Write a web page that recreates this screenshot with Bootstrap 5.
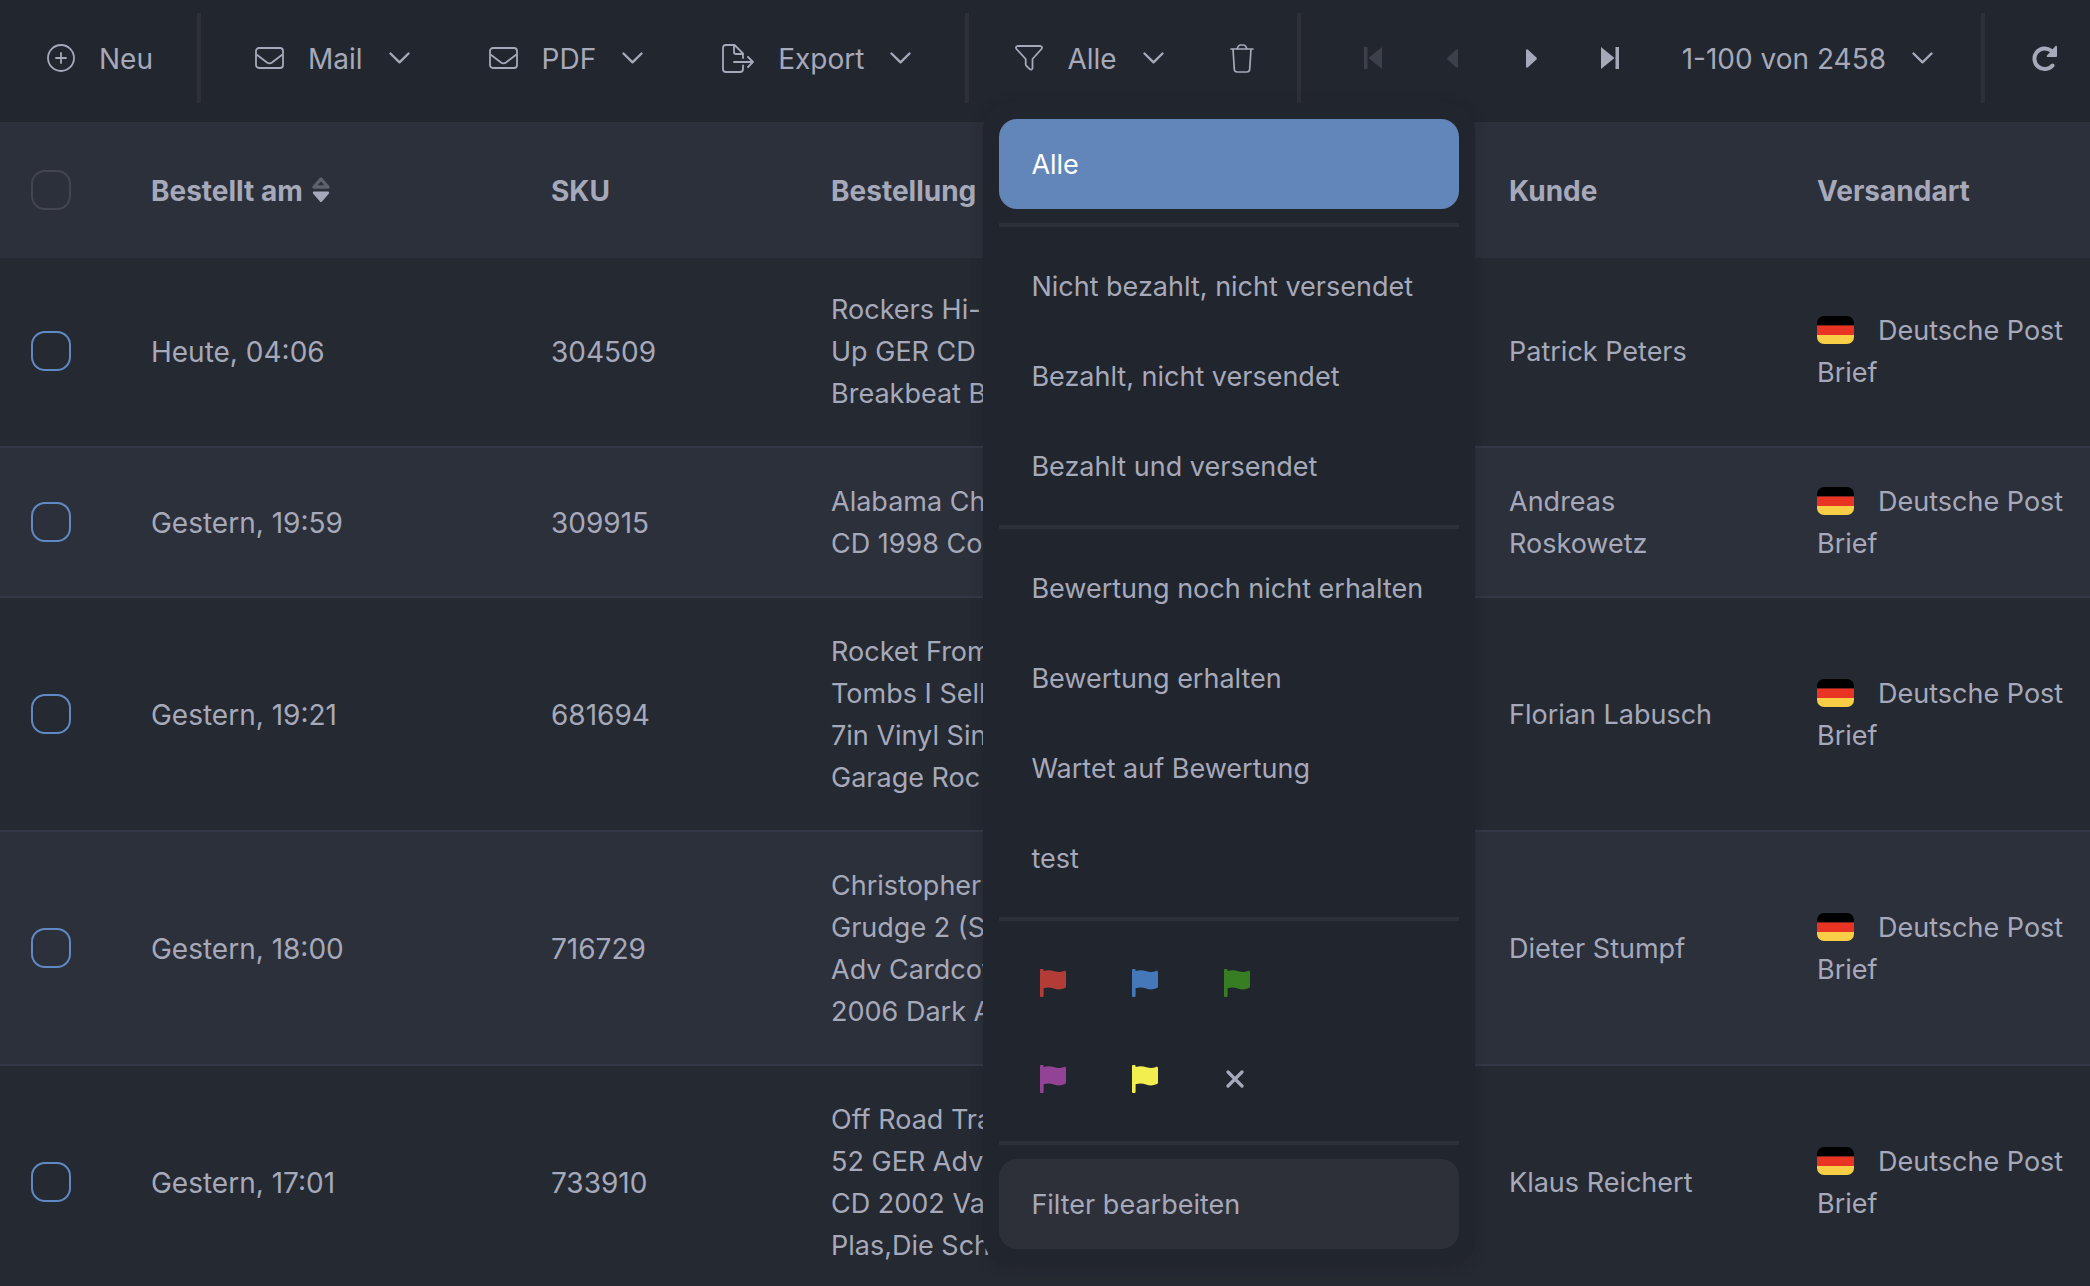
<!DOCTYPE html>
<html lang="de">
<head>
<meta charset="utf-8">
<meta name="viewport" content="width=device-width, initial-scale=1">
<title>Bestellungen</title>
<link href="https://cdn.jsdelivr.net/npm/bootstrap@5.3.0/dist/css/bootstrap.min.css" rel="stylesheet">
<style>
body { background: #252932; color: #a6a9ba; font-family: Inter, "Liberation Sans", sans-serif; font-size: 27px; line-height: 42px; }
.app { height: 100vh; overflow: hidden; }
.toolbar { background: #22262e; height: 122px; padding: 13px 0 19px 7px; position: relative; z-index: 5; font-size: 28px; }
.tool { height: 90px; padding: 0 39px 0 40px; border: 0; border-radius: 14px; background: none; color: inherit; display: flex; align-items: center; gap: 24px; white-space: nowrap; }
.tool:hover { background: #2e3039; }
.tool:disabled { color: #3d404a; background: none; }
.tool span { padding-top: 1px; }
.tool svg, .flag-btn svg { display: block; flex: none; }
.tool .chev { margin-left: 2px; }
.tool-nav { width: 79px; padding: 0; justify-content: center; }
.tool-range { padding-left: 32px; }
.tool-reload { padding-right: 32px; }
.rule-v { width: 4px; height: 90px; background: #2e3039; flex: none; margin: 0 6px 0 15px; }
.rule-first { margin: 0 14px 0 5px; }
.rule-last { margin-left: 9px; }
.filter-menu { --bs-dropdown-bg: #21252d; --bs-dropdown-color: #a6a9ba; --bs-dropdown-link-color: #a6a9ba; --bs-dropdown-link-hover-color: #a6a9ba; --bs-dropdown-link-hover-bg: #2e3039; --bs-dropdown-link-active-bg: #6386ba; --bs-dropdown-link-active-color: #fff; top: 100%; left: 8px; width: 492px; padding: 16px; border: 0; border-radius: 28px; font-size: 27px; box-shadow: 0 2px 14px rgba(20, 22, 30, .2); }
.filter-menu .dropdown-item { height: 90px; padding: 25px 32px 23px; border-radius: 18px; line-height: 42px; }
.filter-menu .dropdown-item.edit { background: #2e3039; }
.filter-menu .dropdown-divider { height: 4px; margin: 14px 0; border: 0; background: #2e3039; opacity: 1; }
.flags { display: grid; grid-template-columns: repeat(3, 92px); padding: 0 8px; }
.flag-btn { height: 96px; border: 0; background: none; color: inherit; padding: 0; display: flex; align-items: center; justify-content: center; }
.orders { width: 100%; table-layout: fixed; border-collapse: separate; border-spacing: 0; }
.orders th, .orders td { padding: 33px 0 31px 40px; vertical-align: middle; }
.orders td { border-top: 2px solid #353945; }
.orders td:nth-child(2), .orders td:nth-child(3) { font-size: 28px; }
.orders th { background: #2c303a; height: 134px; font-size: 28px; font-weight: 700; padding-top: 34px; white-space: nowrap; }
.orders tbody tr:first-child td { border-top-color: #2c303a; padding-top: 31px; }
.orders tbody tr:nth-child(even) { background: #2c303a; }
.orders th:first-child, .orders td:first-child { padding-left: 31px; padding-bottom: 33px; }
.orders td:last-child { padding-right: 20px; }
.orders .form-check-input { display: block; width: 40px; height: 40px; margin: 0; border: 2px solid #6089c4; border-radius: 14px; background-color: transparent; }
.orders th .form-check-input { border-color: #434651; }
.sort-icon { margin-left: 3px; vertical-align: -2px; }
.flag-de { width: 37px; height: 28px; margin-right: 24px; border-radius: 7px; vertical-align: -4px; }
</style>
</head>
<body>
<svg class="d-none" aria-hidden="true">
  <symbol id="mail" viewBox="0 0 29 22"><g fill="none" stroke="currentColor" stroke-width="1.8" stroke-linejoin="round"><rect x="1" y="1" width="27" height="20" rx="3"/><path d="M1.500 7.500 12 15.500q2.500 1.800 5 0L27.500 7.500"/></g></symbol>
  <symbol id="chev" viewBox="0 0 21 12"><path d="M1.500 1.500 10.500 10.300 19.500 1.500" fill="none" stroke="currentColor" stroke-width="2.400" stroke-linecap="round" stroke-linejoin="round"/></symbol>
  <symbol id="flag" viewBox="0 0 26 28"><path d="M0 1.500a1.700 1.700 0 0 1 3.600 0V2C8 .6 11 1.200 14.500 2.300c3.500 1 6.500.8 9.500-.3 1-.4 2 .2 2 1.200v14.300c0 .7-.4 1.300-1 1.600-4 1.700-7.500 1.600-11 .4-3.500-1.100-6.500-1.300-10.400-.2V26.500a1.700 1.700 0 0 1-3.600 0z" fill="currentColor"/></symbol>
  <symbol id="de" viewBox="0 0 37 28"><path d="M0 0h37v9.500H0z" fill="#000"/><path d="M0 9.500h37V19H0z" fill="#e93323"/><path d="M0 19h37v9H0z" fill="#f7ce46"/></symbol>
</svg>
<div class="app">
  <nav class="toolbar d-flex align-items-start" aria-label="Werkzeuge">
    <button class="tool" type="button"><svg width="28" height="28" viewBox="0 0 28 28" fill="none" stroke="currentColor" stroke-width="1.8" stroke-linecap="round"><circle cx="14" cy="14" r="13"/><path d="M14 9v10M9 14h10"/></svg><span>Neu</span></button>
    <div class="rule-v rule-first"></div>
    <button class="tool" type="button"><svg width="29" height="22"><use href="#mail"/></svg><span>Mail</span><svg class="chev" width="21" height="12"><use href="#chev"/></svg></button>
    <button class="tool" type="button"><svg width="29" height="22"><use href="#mail"/></svg><span>PDF</span><svg class="chev" width="21" height="12"><use href="#chev"/></svg></button>
    <button class="tool" type="button"><svg width="32" height="29" viewBox="0 0 32 29" fill="none" stroke="currentColor" stroke-width="1.8" stroke-linecap="round" stroke-linejoin="round"><path d="M21 21.500V25q0 3-3 3H4q-3 0-3-3V4q0-3 3-3h8.500L21 9.500V14M12 1v7q0 2 2 2h7M12 18h19M26 13l5 5-5 5"/></svg><span>Export</span><svg class="chev" width="21" height="12"><use href="#chev"/></svg></button>
    <div class="rule-v"></div>
    <div class="position-relative">
      <button class="tool" type="button" aria-expanded="true" aria-controls="filter"><svg width="28" height="26" viewBox="0 0 28 26" fill="none" stroke="currentColor" stroke-width="1.8" stroke-linejoin="round"><path d="M2.500 1h23q2.400.8 1 3L17.500 14v9.500q-.7 1.800-2.500.8L11.500 21q-.8-.7-.8-1.800V14L1.500 4q-1.400-2.200 1-3z"/></svg><span>Alle</span><svg class="chev" width="21" height="12"><use href="#chev"/></svg></button>
      <div class="dropdown-menu filter-menu show" id="filter">
        <a class="dropdown-item active" href="#">Alle</a>
        <hr class="dropdown-divider">
        <a class="dropdown-item" href="#">Nicht bezahlt, nicht versendet</a>
        <a class="dropdown-item" href="#">Bezahlt, nicht versendet</a>
        <a class="dropdown-item" href="#">Bezahlt und versendet</a>
        <hr class="dropdown-divider">
        <a class="dropdown-item" href="#">Bewertung noch nicht erhalten</a>
        <a class="dropdown-item" href="#">Bewertung erhalten</a>
        <a class="dropdown-item" href="#">Wartet auf Bewertung</a>
        <a class="dropdown-item" href="#">test</a>
        <hr class="dropdown-divider">
        <div class="flags">
          <button class="flag-btn" type="button" aria-label="Rot" style="color:#b43c37"><svg width="26" height="28"><use href="#flag"/></svg></button>
          <button class="flag-btn" type="button" aria-label="Blau" style="color:#4478b9"><svg width="26" height="28"><use href="#flag"/></svg></button>
          <button class="flag-btn" type="button" aria-label="Grün" style="color:#377e22"><svg width="26" height="28"><use href="#flag"/></svg></button>
          <button class="flag-btn" type="button" aria-label="Lila" style="color:#924396"><svg width="26" height="28"><use href="#flag"/></svg></button>
          <button class="flag-btn" type="button" aria-label="Gelb" style="color:#f2ee50"><svg width="26" height="28"><use href="#flag"/></svg></button>
          <button class="flag-btn" type="button" aria-label="Keine Markierung"><svg width="26" height="18" viewBox="0 0 26 18" stroke="currentColor" stroke-width="3.200" stroke-linecap="round"><path d="M4 2l14 14M18 2 4 16"/></svg></button>
        </div>
        <hr class="dropdown-divider">
        <a class="dropdown-item edit" href="#">Filter bearbeiten</a>
      </div>
    </div>
    <button class="tool tool-nav" type="button" aria-label="Löschen"><svg width="24" height="29" viewBox="0 0 24 29" fill="none" stroke="currentColor" stroke-width="1.700" stroke-linecap="round" stroke-linejoin="round"><path d="M1 5h22M7 5l1.200-2.500Q9 1 10.500 1h3q1.500 0 2.300 1.500L17 5M3 5l1.300 20.200q.2 2.800 3 2.800h9.400q2.800 0 3-2.800L21 5"/></svg></button>
    <div class="rule-v"></div>
    <div class="d-flex ms-auto">
      <button class="tool tool-nav" type="button" aria-label="Erste Seite" disabled><svg width="18" height="22" viewBox="0 0 18 22" fill="currentColor"><path d="M0 0h3.500v22H0zM18 0v22L4.500 11z"/></svg></button>
      <button class="tool tool-nav" type="button" aria-label="Vorherige Seite" disabled><svg width="11" height="19" viewBox="0 0 11 19" fill="currentColor"><path d="M11 1v17q-.8 1.400-2 .3L.6 10.500q-.9-1 0-2L9 .7q1.200-1 2 .3z"/></svg></button>
      <button class="tool tool-nav" type="button" aria-label="Nächste Seite"><svg width="11" height="19" viewBox="0 0 11 19" fill="currentColor"><path d="M0 1v17q.8 1.400 2 .3l8.400-7.800q.9-1 0-2L2 .7Q.8-.3 0 1z"/></svg></button>
      <button class="tool tool-nav" type="button" aria-label="Letzte Seite"><svg width="18" height="22" viewBox="0 0 18 22" fill="currentColor"><path d="M14.500 0H18v22h-3.500zM0 0v22l13.500-11z"/></svg></button>
      <button class="tool tool-range" type="button"><span>1-100 von 2458</span><svg class="chev" width="21" height="12"><use href="#chev"/></svg></button>
      <div class="rule-v rule-last"></div>
      <button class="tool tool-reload" type="button" aria-label="Neu laden"><svg width="27" height="26" viewBox="0 0 27 26"><path d="M21.500 20.500A10.300 10.300 0 1 1 20 5.500" fill="none" stroke="currentColor" stroke-width="4" stroke-linecap="round"/><path d="M26 1.500V11q0 1-1 1h-8.500q-1.500-.3-.6-1.500L24.500 1q1.300-.8 1.500.5z" fill="currentColor"/></svg></button>
    </div>
  </nav>
  <table class="orders">
    <colgroup><col style="width:5.31%"><col style="width:19.140%"><col style="width:13.400%"><col style="width:32.440%"><col style="width:14.740%"><col></colgroup>
    <thead><tr>
      <th scope="col"><input class="form-check-input" type="checkbox" aria-label="Alle auswählen"></th>
      <th scope="col">Bestellt am <svg class="sort-icon" width="18" height="26" viewBox="0 0 18 26"><path d="M9 2 16 10H2z" fill="none" stroke="#5d606d" stroke-width="3.400" stroke-linejoin="round"/><path d="M1.500 14.500h15q1.300 1 .3 2.300L10 24.500q-1 1-2 0L1.200 16.800q-1-1.300.3-2.300z" fill="#a6a9ba"/></svg></th>
      <th scope="col">SKU</th><th scope="col">Bestellung</th><th scope="col">Kunde</th><th scope="col">Versandart</th>
    </tr></thead>
    <tbody>
      <tr><td><input class="form-check-input" type="checkbox" aria-label="304509 auswählen"></td><td>Heute, 04:06</td><td>304509</td><td>Rockers Hi-<br>Up GER CD<br>Breakbeat B</td><td>Patrick Peters</td><td><svg class="flag-de"><use href="#de"/></svg>Deutsche Post<br>Brief</td></tr>
      <tr><td><input class="form-check-input" type="checkbox" aria-label="309915 auswählen"></td><td>Gestern, 19:59</td><td>309915</td><td>Alabama Ch<br>CD 1998 Co</td><td>Andreas<br>Roskowetz</td><td><svg class="flag-de"><use href="#de"/></svg>Deutsche Post<br>Brief</td></tr>
      <tr><td><input class="form-check-input" type="checkbox" aria-label="681694 auswählen"></td><td>Gestern, 19:21</td><td>681694</td><td>Rocket From<br>Tombs I Sell<br>7in Vinyl Sin<br>Garage Roc</td><td>Florian Labusch</td><td><svg class="flag-de"><use href="#de"/></svg>Deutsche Post<br>Brief</td></tr>
      <tr><td><input class="form-check-input" type="checkbox" aria-label="716729 auswählen"></td><td>Gestern, 18:00</td><td>716729</td><td>Christopher<br>Grudge 2 (S<br>Adv Cardcov<br>2006 Dark A</td><td>Dieter Stumpf</td><td><svg class="flag-de"><use href="#de"/></svg>Deutsche Post<br>Brief</td></tr>
      <tr><td><input class="form-check-input" type="checkbox" aria-label="733910 auswählen"></td><td>Gestern, 17:01</td><td>733910</td><td>Off Road Tra<br>52 GER Adv<br>CD 2002 Va<br>Plas,Die Schn</td><td>Klaus Reichert</td><td><svg class="flag-de"><use href="#de"/></svg>Deutsche Post<br>Brief</td></tr>
    </tbody>
  </table>
</div>
<script src="https://cdn.jsdelivr.net/npm/bootstrap@5.3.0/dist/js/bootstrap.bundle.min.js"></script>
</body>
</html>
